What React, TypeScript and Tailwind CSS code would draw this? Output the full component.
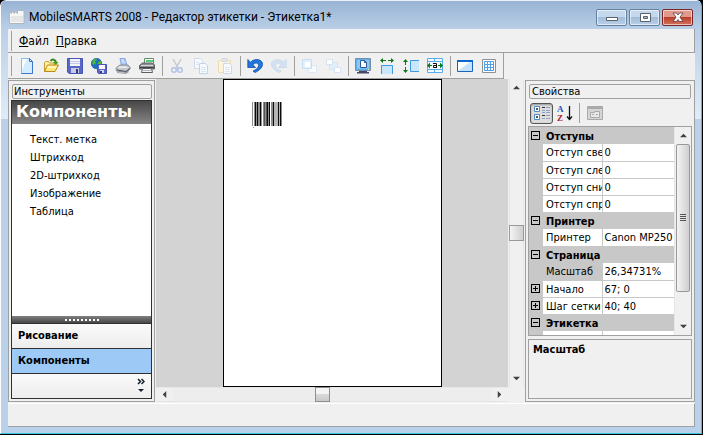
import { useState } from 'react';
import type { ReactNode } from 'react';

interface Tool {
  label: string;
  icon: ReactNode;
  disabled?: boolean;
}

interface PropertyRow {
  name: string;
  value: string;
  nested?: boolean;
}

interface PropertyGroup {
  title: string;
  rows: PropertyRow[];
}

function Icon({ children }: { children: ReactNode }) {
  return (
    <svg className="h-4 w-4" viewBox="0 0 16 16" fill="none" aria-hidden="true">
      {children}
    </svg>
  );
}

const toolGroups: Tool[][] = [
  [
    {
      label: 'Создать',
      icon: (
        <Icon>
          <path d="M2.5.5h8l3 3v12h-11z" fill="#d4ecff" stroke="#8dbbe8" />
          <path d="M3 1h5L3 12z" fill="#f8fdff" />
          <path d="M10.5.5v3h3z" fill="#fff" stroke="#3c6fc0" />
          <path d="M13.5 4v11.500h-11" stroke="#3a75c8" />
        </Icon>
      ),
    },
    {
      label: 'Открыть',
      icon: (
        <Icon>
          <path d="M1.5 13.500V4.500l1-1h3l1 1.500h5v3" fill="#fff3a8" stroke="#c89a2c" />
          <path d="M1.500 13.500l3-6.500h11l-3.500 6.500z" fill="#ffe878" stroke="#b88820" />
          <path d="M5 8h9l-1 2H4z" fill="#fff7bd" />
          <path d="M7.500 3c2-2.500 5-1.500 5.500 1.500" stroke="#3b8a16" strokeWidth="2" />
          <path d="M10 4h5.500L13 7z" fill="#48a01c" />
        </Icon>
      ),
    },
    {
      label: 'Сохранить',
      icon: (
        <Icon>
          <path d="M.5.5h15v15H2L.5 14z" fill="#5a67c8" stroke="#4a54b4" />
          <path d="M3 1h10v7H3z" fill="#f4f5fb" />
          <path d="M3 3.500h10M3 5.500h10" stroke="#c6caea" />
          <path d="M4 10h8v5H4z" fill="#c9cce0" />
          <path d="M9 11h2v4H9z" fill="#34398a" />
        </Icon>
      ),
    },
    {
      label: 'Сохранить на сервере',
      icon: (
        <Icon>
          <circle cx="5.500" cy="5.500" r="5.200" fill="#1d6fc4" stroke="#174b8f" strokeWidth=".6" />
          <path d="M2 2c2-2 4-1 4 0L4 3l1 2-2 2-2-2zM7 4l3-1 .5 3L8 9 6.500 7z" fill="#4bb838" />
          <path d="M6.500 6.500h9v9h-8l-1-1z" fill="#5a67c8" stroke="#4a54b4" />
          <path d="M8 7h6v4H8z" fill="#f4f5fb" />
          <path d="M9 12h4v3H9z" fill="#d5d8ea" />
          <path d="M9 13h2v2H9z" fill="#34398a" />
        </Icon>
      ),
    },
    {
      label: 'Предварительный просмотр',
      icon: (
        <Icon>
          <path d="M5 .5h5l2 7H6.500z" fill="#a8c4f8" stroke="#88a5e0" />
          <path d="M6 2h3M6.500 4h4" stroke="#e4eeff" />
          <path d="M1 10l4-3h8l2.500 3-4 4.500L1.500 13z" fill="#c3c7cd" stroke="#8a8f97" />
          <path d="M4 8.500h7l2 1.500H3z" fill="#f0f1f3" />
          <path d="M2 12l9 1.500 4-3" stroke="#4a4e55" />
          <path d="M2 14.500l9 1 3-2" stroke="#9ea2a8" />
        </Icon>
      ),
    },
    {
      label: 'Печать',
      icon: (
        <Icon>
          <path d="M5.500 6V.5h9V6z" fill="#fff" stroke="#5f8f68" />
          <path d="M7 2h7v2H7z" fill="#54cc72" />
          <path d="M.5 7.500l3-2.500h10l2 2v4h-15z" fill="#8a8e92" stroke="#5a5e62" />
          <path d="M2 7.500h12" stroke="#d6d8da" />
          <path d="M1 9.500h14" stroke="#404347" />
          <path d="M3.500 10.500h9l1 4h-11z" fill="#f5f5f5" stroke="#5b5f63" />
          <path d="M4 12.500h8" stroke="#b5b7ba" />
        </Icon>
      ),
    },
  ],
  [
    {
      label: 'Вырезать',
      disabled: true,
      icon: (
        <Icon>
          <path d="M4 1l5 9M12 1L7 10" stroke="#c4cad4" strokeWidth="1.500" />
          <circle cx="5" cy="12" r="2.300" stroke="#b4c4e6" strokeWidth="1.500" />
          <circle cx="11" cy="12" r="2.300" stroke="#b4c4e6" strokeWidth="1.500" />
        </Icon>
      ),
    },
    {
      label: 'Копировать',
      disabled: true,
      icon: (
        <Icon>
          <path d="M1.500.5h6l2 2v8h-8z" fill="#f6f9fd" stroke="#d0daea" />
          <path d="M6.500 5.500h6l2 2v8h-8z" fill="#f6f9fd" stroke="#c4d1e8" />
          <path d="M8 9.500h5M8 11.500h5M8 13.500h5M3 4.500h3M3 6.500h3" stroke="#d9e4f4" />
        </Icon>
      ),
    },
    {
      label: 'Вставить',
      disabled: true,
      icon: (
        <Icon>
          <path d="M1.500 2.500h12v12h-12z" fill="#fcf4dc" stroke="#ecdcb2" />
          <path d="M5 .5h5v3H5z" fill="#e6e8ec" stroke="#d3d6dc" />
          <path d="M6.500 5.500h6l2 2v8h-8z" fill="#f8fafe" stroke="#ccd8ec" />
          <path d="M8 9.500h5M8 11.500h5M8 13.500h5" stroke="#dce6f4" />
        </Icon>
      ),
    },
  ],
  [
    {
      label: 'Отменить',
      icon: (
        <Icon>
          <path d="M.8 1.500l2.700 2.700C7 .5 14 .5 15.400 5c.9 4-2.900 7.500-7.400 9.500l-2-1.500c4-2 6-4 5.500-6C11 4.500 8 4.500 6 6.800L8.500 9.500H.8z" fill="#2377dc" stroke="#1153ad" strokeWidth=".8" />
        </Icon>
      ),
    },
    {
      label: 'Вернуть',
      disabled: true,
      icon: (
        <Icon>
          <path d="M15.200 1.500l-2.700 2.700C9 .5 2 .5.6 5c-.9 4 2.900 7.500 7.400 9.500l2-1.500c-4-2-6-4-5.500-6C5 4.500 8 4.500 10 6.800L7.500 9.500h7.700z" fill="#d3e2f1" stroke="#c5d7ea" strokeWidth=".8" />
        </Icon>
      ),
    },
  ],
  [
    {
      label: 'На передний план',
      disabled: true,
      icon: (
        <Icon>
          <path d="M7.500 7.500h8v7h-8z" fill="#f8fbfe" stroke="#dce8f6" />
          <path d="M1.500 1.500h9v9h-9z" fill="#e2effc" stroke="#c9def5" />
          <path d="M4 4h5v5H4z" fill="#fff" />
        </Icon>
      ),
    },
    {
      label: 'На задний план',
      disabled: true,
      icon: (
        <Icon>
          <path d="M4.500 4.500h8v7h-8z" fill="#e2eefa" stroke="#d4e4f6" />
          <path d="M1.500 1.500h6v5h-6zM9.500 9.500h6v5h-6z" fill="#fff" stroke="#d4e4f6" />
        </Icon>
      ),
    },
  ],
  [
    {
      label: 'Показать на экране',
      icon: (
        <Icon>
          <path d="M.5.5h15v12H.5z" fill="#62b0e6" stroke="#7290ad" />
          <path d="M2 2h12v8.500H2z" fill="#8cc8f2" />
          <path d="M5.500 2.500h4l2 2v5h-6z" fill="#fff" stroke="#285b98" />
          <path d="M9.500 2.500v2h2" stroke="#285b98" />
          <path d="M13 11.500h1" stroke="#e6ff80" />
          <path d="M4 13h8v1H4zM2 14h12v1.500H2z" fill="#44476a" />
        </Icon>
      ),
    },
    {
      label: 'По ширине',
      icon: (
        <Icon>
          <path d="M2 7h12v9H2z" fill="#c9e6ff" />
          <path d="M2.500 16V7.500h11V16" stroke="#3c9be0" />
          <path d="M4 0v5L1 2.500zM12 0v5l3-2.500zM4 2h3v1H4zM9 2h3v1H9z" fill="#0b7a16" />
        </Icon>
      ),
    },
    {
      label: 'По высоте',
      icon: (
        <Icon>
          <path d="M7 2h9v12H7z" fill="#c9e6ff" />
          <path d="M16 2.500H7.500v11H16" stroke="#3c9be0" />
          <path d="M0 4h5L2.500 1zM0 12h5l-2.500 3zM2 4h1v3H2zM2 9h1v3H2z" fill="#0b7a16" />
        </Icon>
      ),
    },
    {
      label: 'По тексту',
      icon: (
        <Icon>
          <path d="M.5.5h15v14H.5z" fill="#f4faff" stroke="#58acec" />
          <path d="M1 3.500h14M1 11.500h14M7.500 1v2.500M7.500 11.500v3" stroke="#58acec" />
          <path d="M0 7.500l3-3v6zM16 7.500l-3-3v6zM3 7h2v1H3zM11 7h2v1h-2z" fill="#0b7a16" />
          <path d="M6 5.500h3.500v4.500M9.500 7.500H6.500v2h3" stroke="#111" />
        </Icon>
      ),
    },
  ],
  [
    {
      label: 'Рамка',
      icon: (
        <Icon>
          <path d="M.5 2.500h15v11H.5z" fill="#c4e2fb" stroke="#1a64be" />
          <path d="M1 4h12L1 13z" fill="#fbfeff" />
          <path d="M0 2h16v2H0z" fill="#0d66cf" />
        </Icon>
      ),
    },
    {
      label: 'Сетка',
      icon: (
        <Icon>
          <path d="M1.500 1.500h13v13h-13z" fill="#fff" stroke="#909090" />
          <path d="M3.500 3.500h9v9h-9zM6.500 3v10M9.500 3v10M3 6.500h10M3 9.500h10" stroke="#4d9fe8" />
        </Icon>
      ),
    },
  ],
];

const components = ['Текст. метка', 'Штрихкод', '2D-штрихкод', 'Изображение', 'Таблица'];

const groups: PropertyGroup[] = [
  {
    title: 'Отступы',
    rows: [
      { name: 'Отступ све', value: '0' },
      { name: 'Отступ сле', value: '0' },
      { name: 'Отступ сни', value: '0' },
      { name: 'Отступ спр', value: '0' },
    ],
  },
  { title: 'Принтер', rows: [{ name: 'Принтер', value: 'Canon MP250' }] },
  {
    title: 'Страница',
    rows: [
      { name: 'Масштаб', value: '26,34731%' },
      { name: 'Начало', value: '67; 0', nested: true },
      { name: 'Шаг сетки', value: '40; 40', nested: true },
    ],
  },
  { title: 'Этикетка', rows: [{ name: '', value: '' }] },
];

function Arrow({ direction }: { direction: 'up' | 'down' | 'left' | 'right' }) {
  const paths = {
    up: 'M4 2l4 4H0z',
    down: 'M0 2h8L4 6z',
    left: 'M2 4l4-4v8z',
    right: 'M6 4L2 0v8z',
  };
  return (
    <svg className="h-[7px] w-[7px]" viewBox="0 0 8 8" aria-hidden="true">
      <path d={paths[direction]} fill="#404040" />
    </svg>
  );
}

function ScrollBar({ vertical }: { vertical?: boolean }) {
  if (vertical) {
    return (
      <div className="flex w-[15px] shrink-0 flex-col border-x border-[#e6e6e6] bg-[#f0f0f0]">
        <button aria-label="Вверх" className="flex h-[17px] items-center justify-center">
          <Arrow direction="up" />
        </button>
        <div className="-mx-px flex flex-1 flex-col justify-center">
          <div className="h-4 border border-[#999] bg-linear-to-r from-[#f4f4f4] to-[#cfcfcf]" />
        </div>
        <button aria-label="Вниз" className="flex h-[17px] items-center justify-center">
          <Arrow direction="down" />
        </button>
      </div>
    );
  }
  return (
    <div className="flex h-[15px] shrink-0 border-y border-[#e6e6e6] bg-[#ededed]">
      <button aria-label="Влево" className="flex w-[17px] items-center justify-center bg-[#f0f0f0]">
        <Arrow direction="left" />
      </button>
      <div className="-my-px flex flex-1 justify-center pr-5">
        <div className="w-[15px] border border-[#8e8e8e] bg-linear-to-b from-[#f4f4f4] from-50% via-[#d8d8d8] via-50% to-[#cacaca]" />
      </div>
      <button aria-label="Вправо" className="flex w-[17px] items-center justify-center bg-[#f0f0f0]">
        <Arrow direction="right" />
      </button>
    </div>
  );
}

function TitleBar() {
  const base = 'flex h-[17px] w-[31px] items-center justify-center rounded-[2px] border shadow-[inset_0_0_0_1px_#ffffff90]';
  return (
    <header className="flex h-7 shrink-0 items-center px-px pt-1">
      <svg className="h-4 w-4" viewBox="0 0 16 16" aria-hidden="true">
        <path d="M.5 14.500V2l2 2.500V2l3 2.500V2l3 2.500V1.500h6.500v13z" fill="#f6f6f6" stroke="#b0b6bc" />
        <path d="M2 7h12v6H2z" fill="#e6e6e6" />
      </svg>
      <h1 className="ml-1 flex-1 truncate font-['Roboto','Noto_Sans',sans-serif] text-[12px] leading-4">
        MobileSMARTS 2008 - Редактор этикетки - Этикетка1*
      </h1>
      <div className="flex gap-0.5 pr-px">
        <button aria-label="Свернуть" className={`${base} border-[#6581a2] bg-linear-to-b from-[#c5d8ec] from-50% via-[#a3bdd9] via-50% to-[#b8d0e8]`}>
          <svg className="h-4 w-4" viewBox="0 0 16 16"><path d="M2.500 8.500h11v3h-11z" fill="#fff" stroke="#59616c" /></svg>
        </button>
        <button aria-label="Развернуть" className={`${base} border-[#6581a2] bg-linear-to-b from-[#c5d8ec] from-50% via-[#a3bdd9] via-50% to-[#b8d0e8]`}>
          <svg className="h-4 w-4" viewBox="0 0 16 16"><path d="M3.500 4.500h10v8h-10zM6.500 7.500h4v2h-4z" fill="#fff" fillRule="evenodd" stroke="#59616c" /></svg>
        </button>
        <button aria-label="Закрыть" className={`${base} border-[#7b2626] bg-linear-to-b from-[#e09a8d] from-50% via-[#bb3d2c] via-50% to-[#d4735c]`}>
          <svg className="h-4 w-4" viewBox="0 0 16 16"><path d="M3 4h3.500L8 6l1.500-2H13l-3 4.200 3 4.300H9.500L8 10.500l-1.500 2H3l3-4.300z" fill="#fff" stroke="#5b3a40" strokeWidth=".8" /></svg>
        </button>
      </div>
    </header>
  );
}

function ToolBar() {
  return (
    <div className="flex h-[26px] shrink-0 items-center self-start border-r border-b border-[#a0a0a0] pr-0.5">
      <div className="mx-[3px] h-5 w-px bg-[#a0a0a0]" />
      {toolGroups.map((group, i) => (
        <div key={i} className="flex items-center">
          {i > 0 && <div className="mr-0.5 h-5 w-1 border-r border-[#a0a0a0]" />}
          {group.map((tool) => (
            <button key={tool.label} title={tool.label} aria-label={tool.label} disabled={tool.disabled} className="flex h-6 w-6 items-center justify-center">
              {tool.icon}
            </button>
          ))}
        </div>
      ))}
    </div>
  );
}

function ToolBox() {
  const [active, setActive] = useState('Компоненты');

  return (
    <aside className="mt-px flex w-[147px] shrink-0 flex-col border border-[#a0a0a0] p-[2px]">
      <h2 className="mt-px ml-px h-[15px] rounded-[2px] border border-[#a0a0a0] px-px leading-[14px]">Инструменты</h2>
      <div className="mt-px flex flex-1 flex-col border border-[#303030] bg-white">
        <div className="h-[23px] bg-linear-to-b from-[#484848] to-[#868686] px-1 font-['DejaVu_Sans','Noto_Sans',sans-serif] text-[16px] leading-[22px] font-bold text-white">
          {active}
        </div>
        <ul className="flex-1 pt-[7px] pl-[18px]">
          {components.map((name) => (
            <li key={name} className="h-[18px] leading-[18px]">
              <button>{name}</button>
            </li>
          ))}
        </ul>
        <div className="flex h-[7px] items-center justify-center gap-0.5 bg-linear-to-b from-[#808080] to-[#484848]">
          {Array.from({ length: 9 }, (_, i) => (
            <span key={i} className="h-0.5 w-0.5 bg-white" />
          ))}
        </div>
        {['Рисование', 'Компоненты'].map((name) => (
          <button
            key={name}
            onClick={() => setActive(name)}
            className={`h-[25px] border-t border-[#303030] px-1.5 text-left font-bold ${
              active === name ? 'bg-[#9dc9f7]' : 'bg-linear-to-b from-[#fafafa] to-[#ededed]'
            }`}
          >
            {name}
          </button>
        ))}
        <div className="flex h-[25px] items-center justify-end border-t border-[#303030] bg-linear-to-b from-[#fafafa] to-[#ededed] pr-1.5">
          <button aria-label="Настроить кнопки">
            <svg className="h-4 w-2" viewBox="0 0 8 16" fill="none">
              <path d="M1 1l2.500 2.500L1 6M4.500 1L7 3.500 4.500 6" stroke="#16202e" strokeWidth="1.500" />
              <path d="M1 11h6l-3 3z" fill="#16202e" />
            </svg>
          </button>
        </div>
      </div>
    </aside>
  );
}

function Barcode() {
  return (
    <svg className="h-7 w-[30px]" viewBox="0 0 30 28" shapeRendering="crispEdges" aria-hidden="true">
      <path d="M0 0h1v24H0zM2 0h8v24H2zM11 0h7v24h-7zM19 0h11v24H19z" fill="#8c8c8c" />
      <path d="M22 0h4v24h-4zM27 0h1v24h-1z" fill="#b4b4b4" />
      <path d="M12 0h1v24h-1zM14 0h1v24h-1z" fill="#555" />
      <path d="M3 0h1v24H3zM5 0h1v24H5zM8 0h1v24H8zM15 0h1v24h-1zM17 0h1v24h-1zM21 0h1v24h-1zM26 0h1v24h-1zM28 0h1v24h-1z" fill="#0c0c0c" />
      <path d="M1 25h1v1H1z" fill="#999" />
    </svg>
  );
}

function Workspace() {
  return (
    <main className="ml-px flex min-w-0 flex-1">
      <div className="flex min-w-0 flex-1 flex-col">
        <div className="flex flex-1 justify-center bg-[#d3d3d3]">
          <div className="w-[219px] border border-black bg-white pt-[22px] pl-7">
            <Barcode />
          </div>
        </div>
        <ScrollBar />
      </div>
      <div className="mb-[15px] ml-px flex">
        <ScrollBar vertical />
      </div>
    </main>
  );
}

function Expander({ open, label }: { open: boolean; label: string }) {
  return (
    <button aria-label={label} aria-expanded={open} className="ml-0.5 flex h-[9px] w-[9px] items-center justify-center border border-black">
      <svg className="h-[5px] w-[5px]" viewBox="0 0 5 5" shapeRendering="crispEdges">
        <path d={open ? 'M0 2h5v1H0z' : 'M0 2h5v1H0zM2 0h1v5H2z'} />
      </svg>
    </button>
  );
}

function PropertyGrid({ selected, onSelect }: { selected: string; onSelect: (name: string) => void }) {
  return (
    <div className="mt-px flex min-h-0 flex-1 border border-[#a0a0a0] bg-white">
      <div className="relative min-w-0 flex-1 overflow-hidden">
        <table className="absolute inset-x-0 top-0 w-full table-fixed border-collapse">
          <colgroup>
            <col className="w-[14px]" />
            <col className="w-[59px]" />
            <col />
          </colgroup>
          {groups.map((group) => (
            <tbody key={group.title}>
              <tr className="h-[17px] bg-[#c8c8c8]">
                <td className="p-0"><Expander open label={group.title} /></td>
                <th colSpan={2} className="p-0 pt-0.5 pl-[3px] text-left leading-[14px] font-bold">{group.title}</th>
              </tr>
              {group.rows.map((row) => (
                <tr key={row.name} onClick={() => onSelect(row.name)} className="h-[17px]">
                  <td className="bg-[#c8c8c8] p-0">{row.nested && <Expander open={false} label={row.name} />}</td>
                  <td className={`overflow-hidden border-r border-b border-[#c8c8c8] p-0 pt-0.5 pl-[3px] leading-[14px] text-clip whitespace-nowrap ${row.name === selected ? 'bg-[#c8c8c8]' : ''}`}>
                    {row.name}
                  </td>
                  <td className="overflow-hidden border-b border-[#c8c8c8] p-0 pt-0.5 pl-0.5 leading-[14px] whitespace-nowrap">{row.value}</td>
                </tr>
              ))}
            </tbody>
          ))}
        </table>
      </div>
      <div className="flex w-[17px] shrink-0 flex-col border-l border-[#e6e6e6] bg-[#f0f0f0]">
        <button aria-label="Вверх" className="flex h-[17px] items-center justify-center">
          <Arrow direction="up" />
        </button>
        <div className="flex flex-1 flex-col px-px">
          <div className="flex h-[85%] flex-col items-center justify-center gap-px rounded-[2px] border border-[#999] bg-linear-to-r from-[#f4f4f4] to-[#cfcfcf]">
            <span className="h-px w-1.5 bg-[#555]" />
            <span className="h-px w-1.5 bg-[#555]" />
            <span className="h-px w-1.5 bg-[#555]" />
            <span className="h-px w-1.5 bg-[#555]" />
          </div>
        </div>
        <button aria-label="Вниз" className="flex h-[17px] items-center justify-center">
          <Arrow direction="down" />
        </button>
      </div>
    </div>
  );
}

function PropertiesPanel() {
  const [selected, setSelected] = useState('Масштаб');

  return (
    <aside className="mt-px ml-px flex w-[170px] shrink-0 flex-col border border-[#a0a0a0] p-[2px]">
      <h2 className="mx-px mt-px h-[15px] rounded-[2px] border border-[#a0a0a0] px-0.5 leading-[14px]">Свойства</h2>
      <div className="mt-0.5 flex h-6 shrink-0 items-center pl-0.5">
        <button aria-label="По категориям" aria-pressed="true" className="flex h-[21px] w-[23px] items-center justify-center rounded-[3px] border border-[#555] bg-[#dedede] shadow-[inset_0_1px_2px_#999]">
          <Icon>
            <path d="M.5 1.500h5v5h-5zM.5 9.500h5v5h-5z" fill="#fff" stroke="#4c88c4" />
            <path d="M2 4h2M3 3v2M2 12h2M3 11v2" stroke="#123" />
            <path d="M8 2.500h3M8 10.500h3" stroke="#333" />
            <path d="M8 5.500h3M8 7.500h3M8 13.500h3M12 2.500h4M12 5.500h4M12 7.500h4M12 10.500h4M12 13.500h4" stroke="#8fa3c8" />
          </Icon>
        </button>
        <button aria-label="По алфавиту" className="flex h-[21px] w-[23px] items-center justify-center">
          <svg className="h-4 w-4" viewBox="0 0 16 16" fill="none">
            <text x="0" y="7" fontSize="9" fontWeight="bold" fontFamily="Liberation Serif, serif" fill="#2554b8">A</text>
            <text x="0" y="16" fontSize="9" fontWeight="bold" fontFamily="Liberation Serif, serif" fill="#a82424">Z</text>
            <path d="M12.500 1v13M10 11.500l2.500 3 2.500-3" stroke="#111" strokeWidth="1.300" />
          </svg>
        </button>
        <div className="mx-[3px] h-5 w-px bg-[#a0a0a0]" />
        <button aria-label="Страницы свойств" disabled className="flex h-[21px] w-[23px] items-center justify-center">
          <Icon>
            <path d="M.5 1.500h15v13H.5z" fill="#d5d5d5" stroke="#aaa" />
            <path d="M1 3h14" stroke="#aaa" strokeWidth="2" />
            <path d="M3.500 7.500h4v-1h5v6h-9zM5 9.500h2M9 9.500h2" fill="#e8e8e8" stroke="#aaa" />
          </Icon>
        </button>
      </div>
      <PropertyGrid selected={selected} onSelect={setSelected} />
      <section className="mt-[3px] h-[60px] shrink-0 border border-[#a0a0a0] px-1 pt-0.5">
        <h3 className="leading-4 font-bold">{selected}</h3>
      </section>
    </aside>
  );
}

export default function App() {
  return (
    <div className="h-screen bg-black font-['DejaVu_Sans_Condensed','Noto_Sans',sans-serif] text-[11px] text-black select-none">
      <div className="flex h-full flex-col overflow-hidden rounded-t-[6px] border-r border-b border-black">
        <div className="flex min-h-0 flex-1 flex-col rounded-t-[5px] border-t border-r border-b border-l border-t-[#e8f1fa] border-r-[#38c4dc] border-b-[#38c4dc] border-l-white bg-[linear-gradient(to_bottom,#98b3d3_0px,#bad0e8_29px,#dfecf8_118px,#b9d1ea_118px)] px-[7px] pr-[6px] pb-1.5">
          <TitleBar />
          <div className="flex min-h-0 flex-1 flex-col bg-[#f0f0f0]">
            <nav className="flex h-6 shrink-0 items-center border-r border-b border-[#a0a0a0] text-[12px]">
              <div className="ml-[3px] h-5 w-px bg-[#a0a0a0]" />
              <button className="ml-[7px]"><u>Ф</u>айл</button>
              <button className="ml-[7px]"><u>П</u>равка</button>
            </nav>
            <ToolBar />
            <div className="flex min-h-0 flex-1">
              <ToolBox />
              <Workspace />
              <PropertiesPanel />
            </div>
            <footer className="mt-px h-6 shrink-0 border-t border-r border-b border-t-white border-r-[#a0a0a0] border-b-[#a0a0a0]" />
          </div>
        </div>
      </div>
    </div>
  );
}
